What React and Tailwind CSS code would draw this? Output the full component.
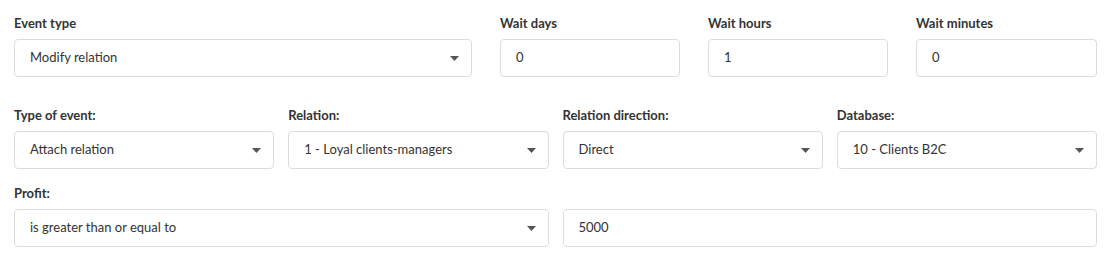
import React from "react";

const Caret = () => (
  <svg width="9" height="5" viewBox="0 0 9 5" className="shrink-0">
    <path d="M0 0 L9 0 L4.5 5 Z" fill="#555" />
  </svg>
);

const Field = ({ label, children }) => (
  <div className="flex flex-col">
    <div className="h-5 leading-5 mb-[6px] text-[13px] font-bold text-[#333]">{label}</div>
    {children}
  </div>
);

const Select = ({ value }) => (
  <div className="h-[38px] flex items-center justify-between pl-[15px] pr-[12px] border border-[#dcdcdc] rounded bg-white text-[13px] text-[#333]">
    <span>{value}</span>
    <Caret />
  </div>
);

const Input = ({ value }) => (
  <div className="h-[38px] flex items-center pl-[15px] border border-[#dcdcdc] rounded bg-white text-[13px] text-[#333]">
    {value}
  </div>
);

export default function App() {
  return (
    <div className="w-[1113px] h-[273px] bg-white pt-[13px] pl-[14px] pr-[16px]" style={{ fontFamily: "Lato, 'Noto Sans', sans-serif" }}>
      <div className="grid grid-cols-[458px_180px_180px_181px] gap-x-7">
        <Field label="Event type">
          <Select value="Modify relation" />
        </Field>
        <Field label="Wait days">
          <Input value="0" />
        </Field>
        <Field label="Wait hours">
          <Input value="1" />
        </Field>
        <Field label="Wait minutes">
          <Input value="0" />
        </Field>
      </div>

      <div className="grid grid-cols-4 gap-x-[14px] mt-[28px]">
        <Field label="Type of event:">
          <Select value="Attach relation" />
        </Field>
        <Field label="Relation:">
          <Select value="1 - Loyal clients-managers" />
        </Field>
        <Field label="Relation direction:">
          <Select value="Direct" />
        </Field>
        <Field label="Database:">
          <Select value="10 - Clients B2C" />
        </Field>
      </div>

      <div className="mt-[14px]">
        <div className="h-5 leading-5 mb-[6px] text-[13px] font-bold text-[#333]">Profit:</div>
        <div className="grid grid-cols-2 gap-x-[14px]">
          <Select value="is greater than or equal to" />
          <Input value="5000" />
        </div>
      </div>
    </div>
  );
}
